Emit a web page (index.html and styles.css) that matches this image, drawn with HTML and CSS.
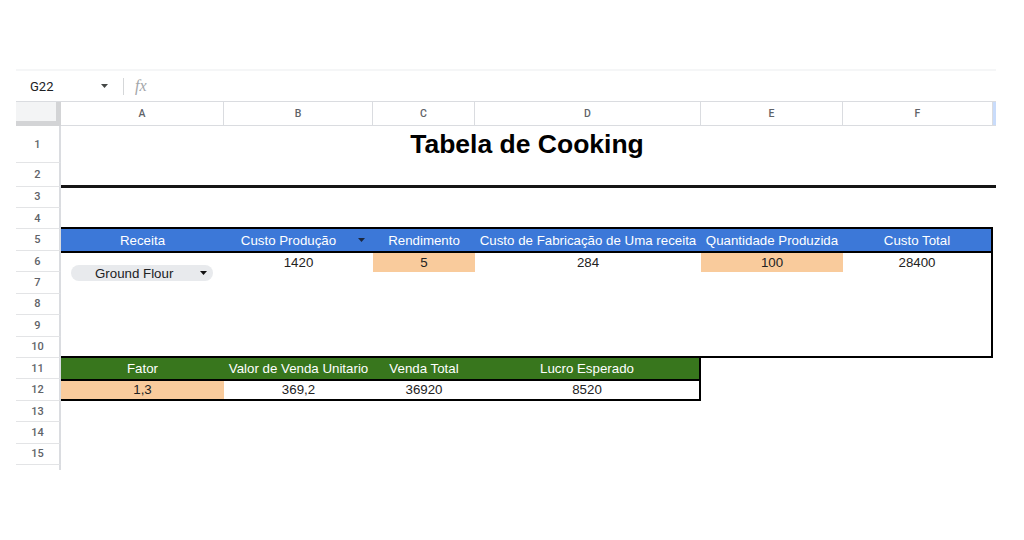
FILE: index.html
```html
<!DOCTYPE html>
<html lang="pt">
<head>
<meta charset="utf-8">
<title>Tabela de Cooking</title>
<link rel="stylesheet" href="styles.css">
</head>
<body>
<div class="sheet">
  <div class="strip"></div>
  <div class="fbar">
    <div class="namebox">
      <span class="ref">G22</span>
      <svg class="nb-arrow" width="7" height="4" viewBox="0 0 7 4"><path d="M0 0h7L3.5 4z"/></svg>
    </div>
    <div class="sep"></div>
    <span class="fx">fx</span>
  </div>
  <div class="grid">
    <div class="corner"></div>
    <div class="ch">A</div>
    <div class="ch">B</div>
    <div class="ch">C</div>
    <div class="ch">D</div>
    <div class="ch">E</div>
    <div class="ch">F</div>
    <div class="ch edge"></div>

    <div class="rh">1</div>
    <div class="rh">2</div>
    <div class="rh">3</div>
    <div class="rh">4</div>
    <div class="rh">5</div>
    <div class="rh">6</div>
    <div class="rh">7</div>
    <div class="rh">8</div>
    <div class="rh">9</div>
    <div class="rh">10</div>
    <div class="rh">11</div>
    <div class="rh">12</div>
    <div class="rh">13</div>
    <div class="rh">14</div>
    <div class="rh">15</div>
    <div class="rh cut"><span>16</span></div>

    <div class="title"><div class="title-text">Tabela de Cooking</div></div>

    <div class="t1">
      <div class="hc">Receita</div>
      <div class="hc filter">Custo Produção<svg class="f-arrow" width="7" height="4" viewBox="0 0 7 4"><path d="M0 0h7L3.5 4z"/></svg></div>
      <div class="hc">Rendimento</div>
      <div class="hc">Custo de Fabricação de Uma receita</div>
      <div class="hc">Quantidade Produzida</div>
      <div class="hc">Custo Total</div>

      <div class="chipcell">
        <div class="chip"><span>Ground Flour</span><svg class="c-arrow" width="7" height="4" viewBox="0 0 7 4"><path d="M0 0h7L3.5 4z"/></svg></div>
      </div>
      <div class="dc">1420</div>
      <div class="dc orange">5</div>
      <div class="dc">284</div>
      <div class="dc orange">100</div>
      <div class="dc">28400</div>
    </div>

    <div class="t2">
      <div class="gc">Fator</div>
      <div class="gc">Valor de Venda Unitario</div>
      <div class="gc">Venda Total</div>
      <div class="gc">Lucro Esperado</div>
      <div class="dc orange">1,3</div>
      <div class="dc">369,2</div>
      <div class="dc">36920</div>
      <div class="dc">8520</div>
    </div>
  </div>
</div>
</body>
</html>
```

FILE: styles.css
```css
html, body {
  margin: 0;
  padding: 0;
  background: #ffffff;
}

body {
  width: 1024px;
  height: 540px;
  overflow: hidden;
  font-family: "Liberation Sans", Arial, sans-serif;
}

.sheet {
  margin: 69px 0 0 16px;
  width: 980px;
}

.strip {
  height: 2px;
  background: #f5f6f7;
}

.fbar {
  height: 30px;
  display: flex;
  align-items: center;
}

.namebox {
  width: 100px;
  box-sizing: border-box;
  padding: 0 8px 0 14px;
  display: flex;
  align-items: center;
}

.ref {
  font-family: Roboto, "Liberation Sans", sans-serif;
  font-size: 13px;
  color: #202124;
}

.nb-arrow {
  margin-left: auto;
  fill: #444746;
}

.sep {
  width: 1px;
  height: 17px;
  margin-left: 7px;
  background: #d5d7d9;
}

.fx {
  margin-left: 11px;
  font-family: "Liberation Serif", serif;
  font-style: italic;
  font-size: 16px;
  color: #a3a6a9;
}

.grid {
  display: grid;
  grid-template-columns: 45px 163px 149px 102px 226px 142px 150px 3px;
  grid-template-rows: 25px 37px 23.5px repeat(13, 21.45px) 4.65px;
}

.corner {
  grid-row: 1;
  grid-column: 1;
  background: #f3f4f5;
  border-top: 1px solid #dadce0;
  box-sizing: border-box;
  box-shadow: inset -5px -5px 0 #d3d4d6;
}

.ch {
  grid-row: 1;
  display: flex;
  align-items: center;
  justify-content: center;
  box-sizing: border-box;
  border-top: 1px solid #dadce0;
  border-bottom: 1px solid #dadce0;
  border-right: 1px solid #dadce0;
  background: #ffffff;
  font-family: Roboto, "Liberation Sans", sans-serif;
  font-weight: 500;
  font-size: 10.5px;
  color: #5f6368;
}

.ch.edge {
  border-right: none;
  background: #c9dcfb;
}

.rh {
  grid-column: 1;
  display: flex;
  align-items: center;
  justify-content: center;
  box-sizing: border-box;
  border-right: 2px solid #dadce0;
  border-bottom: 1px solid #e3e4e6;
  font-family: Roboto, "Liberation Sans", sans-serif;
  font-weight: 500;
  font-size: 11px;
  color: #5f6368;
}

.rh.cut {
  align-items: flex-start;
  overflow: hidden;
  border-bottom: none;
}

.rh.cut span {
  display: block;
  line-height: 21.45px;
}

.title {
  grid-row: 2 / 4;
  grid-column: 2 / 9;
  margin-bottom: -1.5px;
  border-bottom: 3px solid #151515;
}

.title-text {
  height: 37px;
  display: flex;
  align-items: center;
  justify-content: center;
  padding-right: 3px;
  font-weight: bold;
  font-size: 26.5px;
  color: #000000;
}

.t1 {
  grid-row: 6 / 12;
  grid-column: 2 / 8;
  margin-top: -2px;
  border-top: 2px solid #000000;
  border-right: 2px solid #000000;
  border-bottom: 2px solid #000000;
  box-sizing: border-box;
  display: grid;
  grid-template-columns: 163px 149px 102px 226px 142px 148px;
  grid-template-rows: 23.45px 19.45px 21.45px 1fr;
  position: relative;
  z-index: 1;
}

.hc {
  background: #3c78d8;
  color: #ffffff;
  border-bottom: 2px solid #000000;
  box-sizing: border-box;
  display: flex;
  align-items: center;
  justify-content: center;
  white-space: nowrap;
  font-size: 13.3px;
}

.hc.filter {
  position: relative;
  padding-right: 20px;
}

.f-arrow {
  position: absolute;
  right: 8px;
  top: 9px;
  fill: #1b2740;
}

.dc {
  display: flex;
  align-items: center;
  justify-content: center;
  white-space: nowrap;
  font-size: 13.3px;
  color: #222222;
}

.orange {
  background: #f9cb9c;
}

.chipcell {
  grid-row: span 2;
  display: flex;
  align-items: center;
  padding-left: 10px;
}

.chip {
  width: 142px;
  height: 16px;
  box-sizing: border-box;
  border-radius: 8px;
  background: #e8eaed;
  display: flex;
  align-items: center;
  justify-content: space-between;
  padding: 0 6px 0 24px;
  font-size: 13.3px;
  color: #202124;
}

.c-arrow {
  fill: #111111;
}

.t2 {
  grid-row: 12 / 14;
  grid-column: 2 / 6;
  border-right: 2px solid #000000;
  border-bottom: 2px solid #000000;
  box-sizing: border-box;
  display: grid;
  grid-template-columns: 163px 149px 102px 224px;
  grid-template-rows: 22.6px 1fr;
}

.gc {
  background: #38761d;
  color: #ffffff;
  border-bottom: 2px solid #000000;
  box-sizing: border-box;
  display: flex;
  align-items: center;
  justify-content: center;
  white-space: nowrap;
  font-size: 13.3px;
}
```
